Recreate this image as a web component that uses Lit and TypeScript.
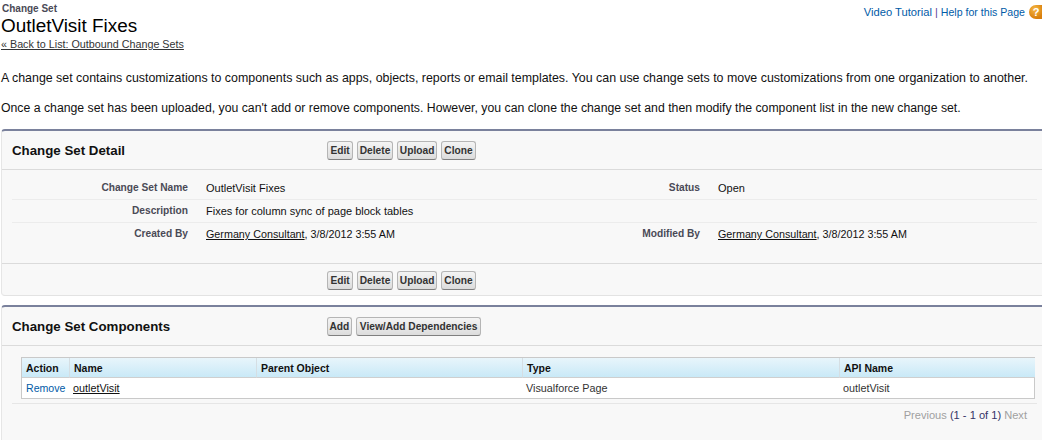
import { css, html, LitElement } from "lit";
import { customElement } from "lit/decorators.js";

@customElement("sf-button")
export class SfButton extends LitElement {
  static styles = css`
    :host {
      display: inline-block;
    }
    .btn {
      display: block;
      height: 17px;
      box-sizing: content-box;
      padding: 0 var(--btn-pad, 2px);
      border: 1px solid #b5b5b5;
      border-bottom-color: #7f7f7f;
      border-radius: 3px;
      background: linear-gradient(#f4f4f4, #e8e8e8 50%, #dcdcdc);
      color: #333;
      font: bold 10.2px/18px "Liberation Sans", Arial, sans-serif;
      white-space: nowrap;
    }
  `;

  render() {
    return html`<span class="btn"><slot></slot></span>`;
  }
}

@customElement("app-root")
export class AppRoot extends LitElement {
  static styles = css`
    :host {
      display: block;
      height: 440px;
      overflow: hidden;
      background: #fff;
      color: #000;
      font: 12px "Liberation Sans", Arial, sans-serif;
    }
    a {
      color: inherit;
    }
    .page-top {
      display: flex;
      justify-content: space-between;
      height: 52px;
      padding: 3px 0 0 2px;
      box-sizing: border-box;
    }
    .type {
      font: bold 10px/11px "Liberation Sans", Arial, sans-serif;
      color: #4a4a56;
    }
    h1 {
      margin: 1px 0 0 -1px;
      font: normal 18.9px/21px "Liberation Sans", Arial, sans-serif;
    }
    .back {
      display: block;
      margin: 2px 0 0 -1px;
      font-size: 10.75px;
      line-height: 13px;
      color: #333435;
    }
    .help {
      display: flex;
      align-items: center;
      gap: 3px;
      height: 15px;
      margin-top: 1px;
      color: #015ba7;
    }
    .help a {
      text-decoration: none;
      font-size: 10.6px;
    }
    .help a.video {
      font-size: 11.2px;
    }
    .help .sep {
      font-size: 10.8px;
      color: #5c3d99;
    }
    .help-icon {
      width: 13px;
      height: 14px;
      margin-left: 1px;
      border-radius: 7px 0 0 7px;
      background: radial-gradient(circle at 45% 30%, #f6b843, #d97f0c 75%);
      color: #fff;
      font: bold 11px/14px "Liberation Sans", Arial, sans-serif;
      padding-left: 1px;
      box-sizing: border-box;
      text-align: center;
    }
    .intro {
      padding-top: 18px;
      height: 59px;
    }
    .intro p {
      margin: 0;
      padding-left: 1px;
      height: 30px;
      line-height: 16px;
      font-size: 12.4px;
      white-space: nowrap;
      color: #111;
    }
    .intro p.second {
      font-size: 12.27px;
    }
    .block {
      margin-left: 1px;
      border-top: 2px solid #7a819c;
      border-left: 1px solid #e6e6e6;
      border-bottom: 1px solid #e3e3e3;
      border-radius: 4px 0 0 4px;
      background: #f8f8f8;
    }
    .detail {
      height: 167px;
      box-sizing: border-box;
    }
    .components {
      margin-top: 9px;
      height: 140px;
      box-sizing: border-box;
    }
    .bar {
      display: flex;
      align-items: center;
      height: 39px;
      box-sizing: border-box;
      padding-left: 10px;
      border-bottom: 1px solid #dbdbdb;
    }
    .bar h2 {
      width: 315px;
      margin: 2px 0 0;
      font: bold 13.3px/16px "Liberation Sans", Arial, sans-serif;
      color: #111;
    }
    .btns {
      display: flex;
      gap: 4px;
    }
    .pad-wide {
      --btn-pad: 2.5px;
    }
    .pad-narrow {
      --btn-pad: 1.5px;
    }
    .view {
      --btn-pad: 3px;
    }
    .fields {
      margin: 0 5px 0 10px;
      height: 93px;
    }
    .field-row {
      display: grid;
      grid-template-columns: 176px 18px 318px 176px 18px 1fr;
      height: 22px;
      border-bottom: 1px solid #ececec;
      font-size: 11px;
    }
    .field-row:first-child {
      height: 29px;
    }
    .field-row:last-child {
      border-bottom: 0;
    }
    .field-row > * {
      line-height: 14px;
      padding-top: 4px;
    }
    .field-row:first-child > * {
      padding-top: 11px;
    }
    .label {
      text-align: right;
      font-weight: bold;
      font-size: 10.2px;
      color: #4a4a56;
    }
    .value {
      color: #111;
      white-space: nowrap;
    }
    .value.by {
      font-size: 10.75px;
    }
    .gap {
      display: block;
    }
    .foot {
      display: flex;
      align-items: center;
      height: 33px;
      padding-left: 325px;
      border-top: 1px solid #dbdbdb;
    }
    .table-wrap {
      margin: 11px 5px 0 10px;
      padding: 0 0 4px 9px;
      border-bottom: 1px solid #e6e6e6;
    }
    .table {
      display: grid;
      grid-template-columns: 48px 187px 266px 317px 195px;
      width: 1014px;
      box-sizing: border-box;
      border: 1px solid #c9c9c9;
      background: #fff;
    }
    .th {
      height: 19px;
      padding-left: 4px;
      border-bottom: 1px solid #cfcfcf;
      border-right: 1px solid #d5dee3;
      background: linear-gradient(#e8f5fb, #c9e9f7);
      font: bold 10.5px/20px "Liberation Sans", Arial, sans-serif;
      color: #111;
    }
    .th:nth-child(5) {
      border-right: 0;
    }
    .td {
      height: 20px;
      padding-left: 3px;
      font-size: 10.8px;
      line-height: 21px;
      color: #333;
    }
    .td.action {
      padding-left: 4px;
      font-size: 10.6px;
    }
    .td.action a {
      color: #015ba7;
      text-decoration: none;
    }
    .td a {
      color: #111;
    }
    .pager {
      padding: 4px 15px 0 0;
      text-align: right;
      font-size: 11.1px;
      line-height: 14px;
      color: #333366;
    }
    .pager .off {
      color: #a0a0a0;
    }
  `;

  private _detailButtons() {
    return html`
      <div class="btns">
        <sf-button class="pad-wide">Edit</sf-button>
        <sf-button class="pad-narrow">Delete</sf-button>
        <sf-button>Upload</sf-button>
        <sf-button>Clone</sf-button>
      </div>
    `;
  }

  render() {
    return html`
      <div class="page-top">
        <div>
          <div class="type">Change Set</div>
          <h1>OutletVisit Fixes</h1>
          <a class="back" href="#">« Back to List: Outbound Change Sets</a>
        </div>
        <div class="help">
          <a class="video" href="#">Video Tutorial</a><span class="sep">|</span>
          <a href="#">Help for this Page</a>
          <span class="help-icon">?</span>
        </div>
      </div>
      <div class="intro">
        <p>
          A change set contains customizations to components such as apps, objects, reports or email
          templates. You can use change sets to move customizations from one organization to another.
        </p>
        <p class="second">
          Once a change set has been uploaded, you can't add or remove components. However, you can
          clone the change set and then modify the component list in the new change set.
        </p>
      </div>

      <section class="block detail">
        <div class="bar">
          <h2>Change Set Detail</h2>
          ${this._detailButtons()}
        </div>
        <div class="fields">
          <div class="field-row">
            <span class="label">Change Set Name</span><span class="gap"></span>
            <span class="value">OutletVisit Fixes</span>
            <span class="label">Status</span><span class="gap"></span>
            <span class="value">Open</span>
          </div>
          <div class="field-row">
            <span class="label">Description</span><span class="gap"></span>
            <span class="value">Fixes for column sync of page block tables</span>
          </div>
          <div class="field-row">
            <span class="label">Created By</span><span class="gap"></span>
            <span class="value by"><a href="#">Germany Consultant</a>, 3/8/2012 3:55 AM</span>
            <span class="label">Modified By</span><span class="gap"></span>
            <span class="value by"><a href="#">Germany Consultant</a>, 3/8/2012 3:55 AM</span>
          </div>
        </div>
        <div class="foot">${this._detailButtons()}</div>
      </section>

      <section class="block components">
        <div class="bar">
          <h2>Change Set Components</h2>
          <div class="btns">
            <sf-button class="pad-narrow">Add</sf-button>
            <sf-button class="view">View/Add Dependencies</sf-button>
          </div>
        </div>
        <div class="table-wrap">
          <div class="table">
            <div class="th">Action</div>
            <div class="th">Name</div>
            <div class="th">Parent Object</div>
            <div class="th">Type</div>
            <div class="th">API Name</div>
            <div class="td action"><a href="#">Remove</a></div>
            <div class="td"><a href="#">outletVisit</a></div>
            <div class="td"></div>
            <div class="td">Visualforce Page</div>
            <div class="td">outletVisit</div>
          </div>
        </div>
        <div class="pager">
          <span class="off">Previous</span> (1 - 1 of 1) <span class="off">Next</span>
        </div>
      </section>
    `;
  }
}
